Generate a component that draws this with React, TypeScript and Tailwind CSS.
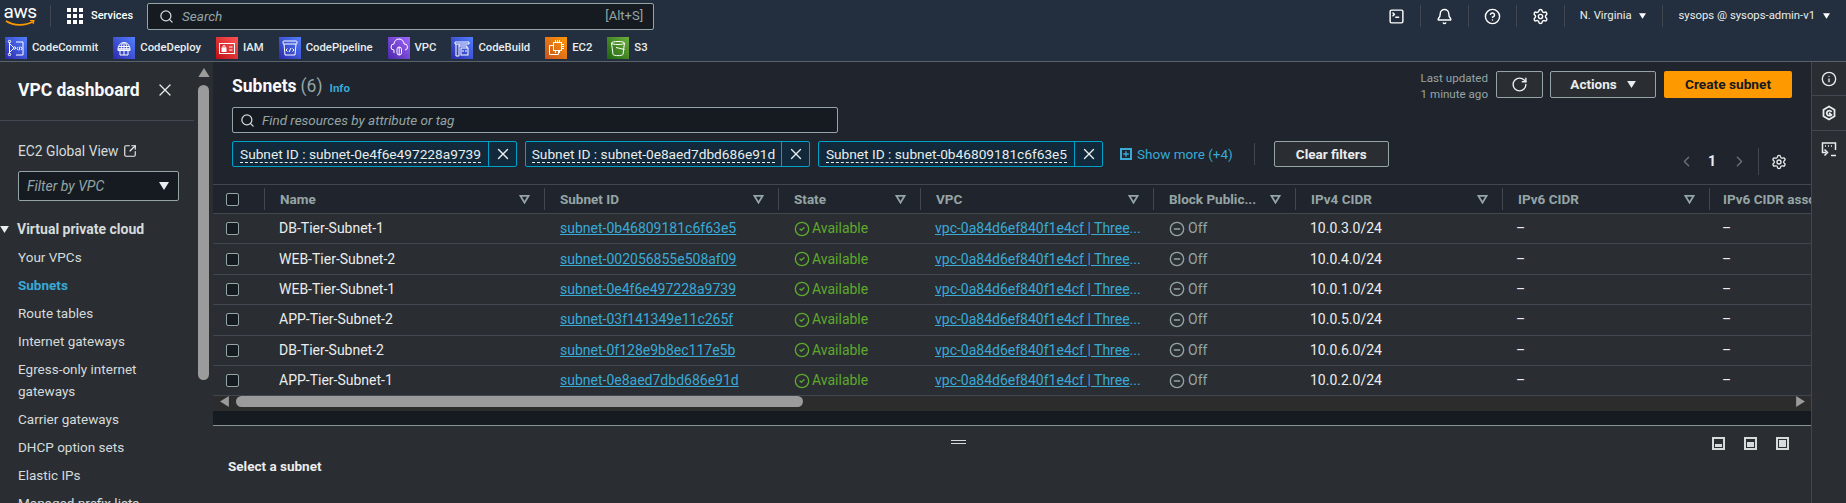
import { Bell, ChevronLeft, ChevronRight, CircleCheck, CircleHelp, CircleMinus, Info, Plus, RotateCw, Search, Settings, SquareArrowOutUpRight, SquareTerminal, X } from "lucide-react";
import type { ReactNode } from "react";

const Caret = ({ className = "" }: { className?: string }) => (
  <svg viewBox="0 0 10 8" className={className} fill="currentColor">
    <path d="M0 0h10L5 8z" />
  </svg>
);

const FilterCaret = () => (
  <svg viewBox="0 0 12 10" className="h-[9px] w-[11px] shrink-0 text-[#95a5a6]" fill="none" stroke="currentColor" strokeWidth="2">
    <path d="M1.5 1h9L6 8.5z" />
  </svg>
);

const Tile = ({ color, children }: { color: string; children: ReactNode }) => (
  <span className={`flex h-[22px] w-[22px] shrink-0 items-center justify-center ${color}`}>
    <svg viewBox="0 0 22 22" className="h-[22px] w-[22px]" fill="none" stroke="white" strokeWidth="1">
      {children}
    </svg>
  </span>
);

const blue = "bg-linear-to-tr from-[#2e27ad] to-[#527fff]";

const favorites = [
  {
    name: "CodeCommit",
    color: blue,
    icon: (
      <>
        <path d="M4.500 5v12M4.500 6.500l4.500 4.500-4.500 4.500" />
        <circle cx="4.500" cy="4.500" r="1.200" />
        <circle cx="4.500" cy="17.500" r="1.200" />
        <circle cx="9.500" cy="11" r="1.200" />
        <path d="M11 5h7v13h-7" />
        <path d="M13 13l-1-1.500 1-1.500M16 13l1-1.500-1-1.500M15 9.500l-1 4" />
      </>
    ),
  },
  {
    name: "CodeDeploy",
    color: blue,
    icon: (
      <>
        <path d="M5 12a6 6.500 0 0 1 12 0z" />
        <path d="M11 5.500V12M8.500 12c-.5-2.500 0-5 1.500-6.500M13.500 12c.5-2.500 0-5-1.500-6.500M5.500 9.500h11" />
        <path d="M5 12h12v1.500H5zM7 13.500v4.500h8v-4.500M11 13.500V18" />
      </>
    ),
  },
  {
    name: "IAM",
    color: "bg-linear-to-tr from-[#bd0816] to-[#ff5252]",
    icon: (
      <>
        <rect x="3.500" y="6.500" width="15" height="10" />
        <rect x="6" y="11" width="4" height="3.500" fill="white" />
        <path d="M7 11V9.500a1 1 0 0 1 2 0V11M13 10h3.500M13 13h3.500" />
      </>
    ),
  },
  {
    name: "CodePipeline",
    color: blue,
    icon: (
      <>
        <rect x="4" y="4" width="14" height="3" rx="1" />
        <path d="M5 7l1 11h10l1-11" />
        <path d="M8.500 11.500l-1.500 1.500 1.500 1.500M13.500 11.500l1.500 1.500-1.500 1.500M12 11l-2 4" />
      </>
    ),
  },
  {
    name: "VPC",
    color: "bg-linear-to-tr from-[#4d27a8] to-[#a166ff]",
    icon: (
      <>
        <path d="M6 13a3 3 0 0 1 0-6 5 5 0 0 1 10 0 3 3 0 0 1 1 6" />
        <rect x="9" y="10" width="4.500" height="8" rx="2.200" />
        <path d="M11.200 10v8M6 13v3" />
      </>
    ),
  },
  {
    name: "CodeBuild",
    color: blue,
    icon: (
      <>
        <path d="M4 5h14v2H4zM5 7v12h3V7M8 9h8v2" />
        <rect x="10" y="11" width="7" height="7" />
        <path d="M12 13v2M15 13v2" />
      </>
    ),
  },
  {
    name: "EC2",
    color: "bg-linear-to-tr from-[#c8511b] to-[#ff9900]",
    icon: (
      <>
        <rect x="8.500" y="5.500" width="8" height="8" />
        <path d="M8.500 8.500H4.500v9h9v-4" />
        <path d="M10.500 3v2.500M12.500 3v2.500M14.500 3v2.500M10.500 13.500V16M14.500 13.500V16M19 7.500h-2.500M19 9.500h-2.500M19 11.500h-2.500" />
      </>
    ),
  },
  {
    name: "S3",
    color: "bg-linear-to-tr from-[#1b660f] to-[#6cae3e]",
    icon: (
      <>
        <path d="M4.500 6c0-2 13-2 13 0s-13 2-13 0z" />
        <path d="M4.500 6l1.500 11.500c1 1.500 9 1.500 10 0L17.500 6" />
        <path d="M9 10.500l8.500 2" />
      </>
    ),
  },
];

const navLinks = ["Your VPCs", "Subnets", "Route tables", "Internet gateways", "Egress-only internet gateways", "Carrier gateways", "DHCP option sets", "Elastic IPs", "Managed prefix lists"];

const columns = "grid grid-cols-[51px_280px_234px_142px_233px_142px_207px_207px_102px]";

const headers = ["Name", "Subnet ID", "State", "VPC", "Block Public...", "IPv4 CIDR", "IPv6 CIDR"];

const subnets = [
  ["DB-Tier-Subnet-1", "subnet-0b46809181c6f63e5", "10.0.3.0/24"],
  ["WEB-Tier-Subnet-2", "subnet-002056855e508af09", "10.0.4.0/24"],
  ["WEB-Tier-Subnet-1", "subnet-0e4f6e497228a9739", "10.0.1.0/24"],
  ["APP-Tier-Subnet-2", "subnet-03f141349e11c265f", "10.0.5.0/24"],
  ["DB-Tier-Subnet-2", "subnet-0f128e9b8ec117e5b", "10.0.6.0/24"],
  ["APP-Tier-Subnet-1", "subnet-0e8aed7dbd686e91d", "10.0.2.0/24"],
];

const chips = ["subnet-0e4f6e497228a9739", "subnet-0e8aed7dbd686e91d", "subnet-0b46809181c6f63e5"];

const Divider = () => <span className="h-[22px] w-px shrink-0 bg-[#414750]" />;

const Checkbox = () => <span className="block h-[13px] w-[13px] rounded-[2px] border border-[#95a5a6] bg-[#161b22]" />;

export default function App() {
  return (
    <div className="flex h-screen w-screen flex-col overflow-hidden bg-[#2a2e33] font-['Roboto',sans-serif] text-[14px] text-[#d5dbdb]">
      {/* top nav */}
      <header className="h-[62px] shrink-0 border-b border-[#5a626c] bg-[#232f3e]">
        <div className="flex h-[32px] items-center pl-[5px]">
          <div className="relative flex h-[26px] w-[30px] flex-col items-center leading-none text-white">
            <span className="text-[19px] leading-[18px] tracking-[-0.5px]">aws</span>
            <svg viewBox="0 0 30 7" className="absolute top-[17px] left-0 h-[7px] w-[30px]" fill="none">
              <path d="M1 1c8 5 19 5 27 .5" stroke="#ff9900" strokeWidth="1.800" />
              <path d="M25 .5l4 0-1 3.500" stroke="#ff9900" strokeWidth="1.200" />
            </svg>
          </div>
          <span className="mr-[16px] ml-[15px] h-[22px] w-px bg-[#414750]" />
          <div className="grid grid-cols-3 gap-[2px]">
            {Array.from({ length: 9 }).map((_, i) => (
              <span key={i} className="h-[4px] w-[4px] bg-white" />
            ))}
          </div>
          <span className="ml-[8px] text-[11px] font-medium text-white">Services</span>
          <div className="ml-[14px] flex h-[27px] w-[507px] items-center rounded-[2px] border border-[#95a5a6] bg-[#161b22] pr-[10px] pl-[11px]">
            <Search size={15} strokeWidth={2} className="text-[#d5dbdb]" />
            <span className="ml-[8px] flex-1 text-[13.500px] text-[#95a5a6] italic">Search</span>
            <span className="text-[13px] text-[#95a5a6]">[Alt+S]</span>
          </div>
          <div className="ml-auto flex items-center pr-[16px] text-white">
            <SquareTerminal size={17} strokeWidth={2} />
            <span className="mx-[15px] h-[22px] w-px bg-[#414750]" />
            <Bell size={17} strokeWidth={2} />
            <span className="mx-[15px] h-[22px] w-px bg-[#414750]" />
            <CircleHelp size={17} strokeWidth={2} />
            <span className="mx-[15px] h-[22px] w-px bg-[#414750]" />
            <Settings size={17} strokeWidth={2} />
            <span className="mx-[15px] h-[22px] w-px bg-[#414750]" />
            <span className="text-[11.300px] text-[#eaeded]">N. Virginia</span>
            <Caret className="ml-[7px] h-[6px] w-[7px]" />
            <span className="mx-[16px] h-[22px] w-px bg-[#414750]" />
            <span className="text-[11.300px] text-[#eaeded]">sysops @ sysops-admin-v1</span>
            <Caret className="ml-[8px] h-[6px] w-[7px]" />
          </div>
        </div>
        <div className="flex h-[29px] items-center gap-[15px] pt-[3px] pl-[5px]">
          {favorites.map((f) => (
            <div key={f.name} className="flex items-center gap-[5px]">
              <Tile color={f.color}>{f.icon}</Tile>
              <span className="text-[11.300px] font-medium text-[#eaeded]">{f.name}</span>
            </div>
          ))}
        </div>
      </header>

      <div className="flex min-h-0 flex-1">
        {/* side nav */}
        <aside className="flex w-[213px] shrink-0 bg-[#2a2e33]">
          <div className="w-[194px] shrink-0">
            <div className="flex h-[59px] items-center justify-between border-b border-[#414750] pr-[19px] pb-[2px] pl-[18px]">
              <h2 className="text-[17.500px] font-bold text-[#fafafa]">VPC dashboard</h2>
              <X size={20} strokeWidth={1.500} className="text-[#eaeded]" />
            </div>
            <div className="flex items-center gap-[5px] pt-[20px] pl-[18px] leading-[20px]">
              <span className="text-[13.800px]">EC2 Global View</span>
              <SquareArrowOutUpRight size={14} strokeWidth={2} className="text-[#eaeded]" />
            </div>
            <div className="mt-[10px] ml-[18px] flex h-[30px] w-[161px] items-center justify-between rounded-[2px] border border-[#95a5a6] bg-[#161b22] pr-[9px] pl-[8px]">
              <span className="text-[#95a5a6] italic">Filter by VPC</span>
              <Caret className="h-[8px] w-[10px] text-[#eaeded]" />
            </div>
            <div className="mt-[17px] flex items-center leading-[22px] font-bold">
              <Caret className="mr-[8px] h-[7px] w-[9px] text-[#eaeded]" />
              Virtual private cloud
            </div>
            <ul className="flex flex-col gap-[6.500px] pt-[7px] pr-[12px] pl-[18px] text-[13.500px] leading-[21.500px]">
              {navLinks.map((l) => (
                <li key={l} className={l === "Subnets" ? "font-bold text-[#39a9d6]" : ""}>
                  {l}
                </li>
              ))}
            </ul>
          </div>
          <div className="flex w-[19px] flex-col items-center pt-[6px] pr-[4px] pl-[4px]">
            <Caret className="h-[9px] w-[12px] rotate-180 text-[#9b9b9b]" />
            <span className="mt-[8px] h-[295px] w-[11px] rounded-full bg-[#9b9b9b]" />
          </div>
        </aside>

        <main className="flex min-w-0 flex-1 flex-col">
          <section className="h-[349px] shrink-0 overflow-hidden bg-[#20242c]">
            <div className="flex h-[122px] flex-col pr-[19px] pl-[19px]">
              <div className="flex h-[36px] items-start pt-[9px]">
                <div className="flex items-baseline pt-[2px]">
                  <h1 className="text-[17.500px] font-bold text-[#fafafa]">Subnets</h1>
                  <span className="ml-[4px] text-[17.500px] text-[#95a5a6]">(6)</span>
                  <span className="ml-[7px] text-[11.500px] font-bold text-[#39a9d6]">Info</span>
                </div>
                <div className="ml-auto flex h-[27px] items-center">
                  <span className="mt-[2px] w-[80px] text-right text-[11.600px] leading-[16px] text-[#95a5a6]">
                    Last updated
                    <br />1 minute ago
                  </span>
                  <span className="ml-[8px] flex h-[27px] w-[47px] items-center justify-center rounded-[2px] border border-[#95a5a6] bg-[#2a2e33]">
                    <RotateCw size={17} strokeWidth={2} className="text-[#eaeded]" />
                  </span>
                  <span className="ml-[7px] flex h-[27px] w-[106px] items-center justify-center gap-[10px] rounded-[2px] border border-[#95a5a6] bg-[#2a2e33] text-[13.500px] font-bold text-[#eaeded]">
                    Actions
                    <Caret className="h-[7px] w-[9px]" />
                  </span>
                  <span className="ml-[8px] flex h-[27px] w-[128px] items-center justify-center rounded-[2px] bg-[#ff9900] text-[13.700px] font-bold text-[#16191f]">
                    Create subnet
                  </span>
                </div>
              </div>
              <div className="mt-[9px] flex h-[26px] w-[606px] items-center rounded-[2px] border border-[#95a5a6] bg-[#161b22] px-[7px]">
                <Search size={15} strokeWidth={2} className="text-[#d5dbdb]" />
                <span className="ml-[7px] text-[13.500px] text-[#95a5a6] italic">Find resources by attribute or tag</span>
              </div>
              <div className="mt-[8px] flex items-start">
                <div className="flex h-[26px] items-center">
                  <div className="flex gap-[8px]">
                    {chips.map((c) => (
                      <div key={c} className="flex h-[26px] w-[285px] items-center rounded-[2px] border border-[#00a1c9] bg-[#12293b]">
                        <span className="flex flex-1 justify-center">
                          <span className="border-b border-dashed border-[#eaeded] text-[13.700px] leading-[16px] text-[#eaeded]">Subnet ID : {c}</span>
                        </span>
                        <span className="flex h-full w-[28px] items-center justify-center border-l border-[#00a1c9]">
                          <X size={18} strokeWidth={1.800} className="text-[#eaeded]" />
                        </span>
                      </div>
                    ))}
                  </div>
                  <span className="ml-[17px] flex h-[12px] w-[12px] items-center justify-center border-2 border-[#39a9d6]">
                    <Plus size={8} strokeWidth={4} className="text-[#39a9d6]" />
                  </span>
                  <span className="ml-[5px] text-[13.500px] text-[#39a9d6]">Show more (+4)</span>
                  <span className="mr-[19px] ml-[21px] h-[22px] w-px bg-[#414750]" />
                  <span className="flex h-[26px] w-[115px] items-center justify-center rounded-[2px] border border-[#95a5a6] bg-[#2a2e33] text-[13.500px] font-bold text-[#eaeded]">
                    Clear filters
                  </span>
                </div>
                <div className="mt-[7px] ml-auto flex h-[27px] items-center pr-[5px]">
                  <ChevronLeft size={17} className="text-[#687078]" />
                  <span className="mr-[15px] ml-[13px] text-[14px] font-bold text-[#eaeded]">1</span>
                  <ChevronRight size={17} className="text-[#687078]" />
                  <span className="mr-[12px] ml-[10px] h-[27px] w-px bg-[#414750]" />
                  <Settings size={16} strokeWidth={2} className="text-[#eaeded]" />
                </div>
              </div>
            </div>
            <div className={`${columns} h-[30px] items-center border-y border-[#414750] text-[13.500px] font-bold text-[#95a5a6]`}>
              <div className="flex justify-center pr-[12px]">
                <Checkbox />
              </div>
              {headers.map((h) => (
                <div key={h} className="flex items-center whitespace-nowrap">
                  <Divider />
                  <span className="ml-[15px] flex-1 overflow-hidden">{h}</span>
                  <span className="pr-[14px]">
                    <FilterCaret />
                  </span>
                </div>
              ))}
              <div className="flex items-center whitespace-nowrap">
                <Divider />
                <span className="ml-[13px]">IPv6 CIDR asso</span>
              </div>
            </div>
            {subnets.map(([name, id, cidr]) => (
              <div key={id} className={`${columns} h-[30.400px] items-center border-b border-[#414750] bg-[#2a2e33] whitespace-nowrap last:border-b-0`}>
                <div className="flex justify-center pr-[12px]">
                  <Checkbox />
                </div>
                <span className="pl-[15px] text-[#eaeded]">{name}</span>
                <span className="pl-[16px] text-[#39a9d6] underline">{id}</span>
                <span className="flex items-center gap-[2px] pl-[16px] text-[#5ea82c]">
                  <CircleCheck size={16} strokeWidth={2} />
                  Available
                </span>
                <span className="pl-[15px] text-[#39a9d6]">
                  <span className="underline">vpc-0a84d6ef840f1e4cf | Three</span>...
                </span>
                <span className="flex items-center gap-[3px] pl-[16px] text-[#95a5a6]">
                  <CircleMinus size={16} strokeWidth={2} />
                  Off
                </span>
                <span className="pl-[15px] text-[#eaeded]">{cidr}</span>
                <span className="pl-[14px] text-[#eaeded]">–</span>
                <span className="pl-[13px] text-[#eaeded]">–</span>
              </div>
            ))}
            <div className="flex h-[15px] items-start bg-[#2c2c2c] pr-[5px] pl-[6px]">
              <Caret className="mt-[1px] h-[9px] w-[11px] rotate-90 text-[#9b9b9b]" />
              <span className="ml-[6px] h-[11px] w-[567px] rounded-full bg-[#9b9b9b]" />
              <Caret className="mt-[1px] ml-auto h-[9px] w-[11px] -rotate-90 text-[#9b9b9b]" />
            </div>
          </section>
          <div className="h-[15px] shrink-0 border-b border-[#879596] bg-[#161b22]" />
          <section className="relative min-h-0 flex-1 bg-[#2a2e33] pt-[30px] pl-[15px]">
            <span className="absolute top-[14px] left-[738px] block h-[4px] w-[15px] border-y border-[#d5dbdb]" />
            <div className="absolute top-[11px] right-[22px] flex gap-[19px]">
              <span className="flex h-[13px] w-[13px] items-end border-2 border-[#d5dbdb] p-px">
                <span className="h-[3px] w-full bg-[#d5dbdb]" />
              </span>
              <span className="flex h-[13px] w-[13px] items-end border-2 border-[#d5dbdb] p-px">
                <span className="h-[5px] w-full bg-[#d5dbdb]" />
              </span>
              <span className="flex h-[13px] w-[13px] items-end border-2 border-[#d5dbdb] p-px">
                <span className="h-full w-full bg-[#d5dbdb]" />
              </span>
            </div>
            <p className="text-[13.500px] font-bold text-[#eaeded]">Select a subnet</p>
          </section>
        </main>

        {/* tools rail */}
        <aside className="flex w-[35px] shrink-0 flex-col items-center border-l border-[#414750] bg-[#2a2e33] text-[#eaeded]">
          <div className="flex h-[34px] w-full items-center justify-center border-b border-[#414750]">
            <Info size={16} strokeWidth={2} />
          </div>
          <div className="flex h-[35px] w-full items-center justify-center border-b border-[#414750]">
            <svg viewBox="0 0 16 16" className="h-[16px] w-[16px]" fill="none" stroke="currentColor" strokeWidth="1.800">
              <path d="M8 1.500l5.500 3.200v6.600L8 14.500l-5.500-3.200V4.700z" />
              <path d="M10.500 7A2.500 2.500 0 1 0 10 10M8 8l3 2.500" />
            </svg>
          </div>
          <div className="flex h-[35px] w-full items-center justify-center">
            <svg viewBox="0 0 16 16" className="h-[16px] w-[16px]" fill="none" stroke="currentColor" strokeWidth="1.500">
              <path d="M5 11.500H1.500v-9.500h13v7" />
              <path d="M4 5h1M7 5h1M10 5h1" />
              <path d="M3.500 8.500l3 3-3 3M10 14.500h5" />
            </svg>
          </div>
        </aside>
      </div>
    </div>
  );
}
